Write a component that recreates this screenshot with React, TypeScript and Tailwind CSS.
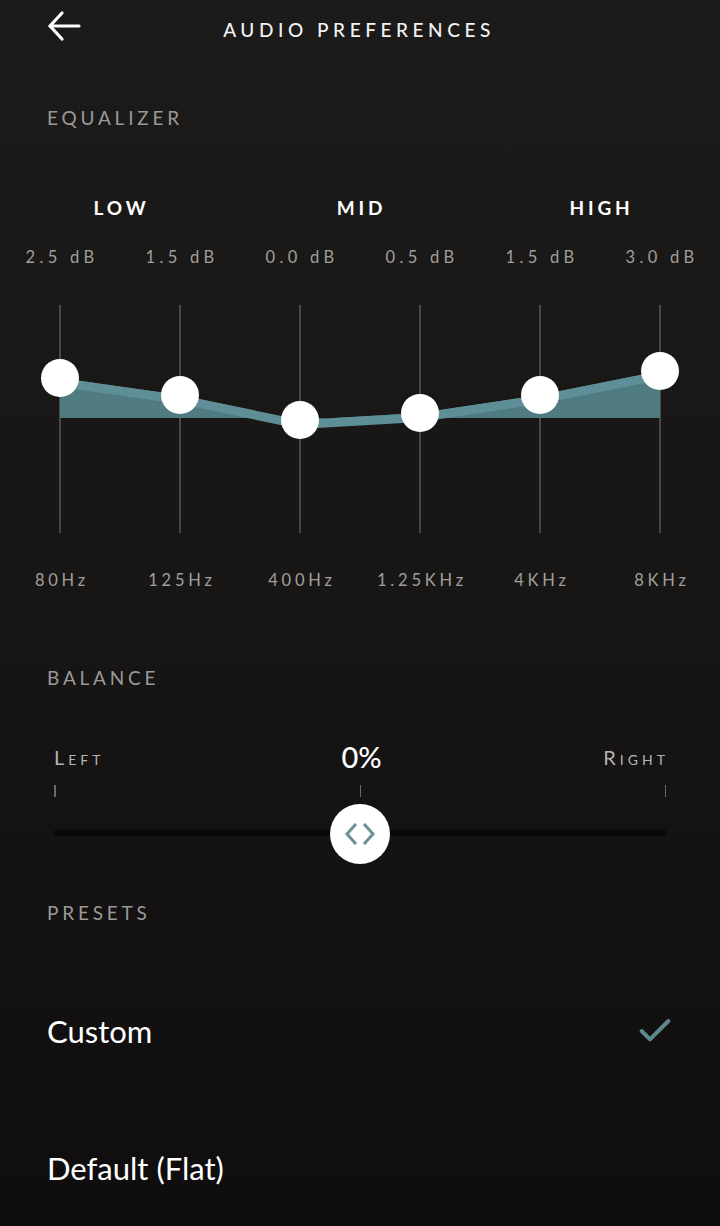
import { Check } from 'lucide-react';

const BANDS = [
  { hz: '80Hz', db: '2.5 dB', y: 109 },
  { hz: '125Hz', db: '1.5 dB', y: 126 },
  { hz: '400Hz', db: '0.0 dB', y: 151 },
  { hz: '1.25KHz', db: '0.5 dB', y: 144 },
  { hz: '4KHz', db: '1.5 dB', y: 126 },
  { hz: '8KHz', db: '3.0 dB', y: 102 },
];

const GROUPS = ['LOW', 'MID', 'HIGH'];

const FONT = "font-['Lato','Noto_Sans',sans-serif]";

function SectionLabel({ children, className = '' }: { children: string; className?: string }) {
  return (
    <p className={`px-[47px] text-[19px] leading-[24px] tracking-[0.2em] text-[#9b9997] ${className}`}>
      {children}
    </p>
  );
}

function EqChart() {
  const base = 149;
  const xs = BANDS.map((_, i) => 60 + i * 120);
  const line = BANDS.map((b, i) => `${xs[i]},${b.y}`).join(' ');
  const lower = BANDS.map((b, i) => `${xs[i]},${b.y + 9}`).reverse().join(' ');
  const area = `60,${base} ${line} 660,${base}`;
  return (
    <svg width="720" height="276" viewBox="0 0 720 276" className="block">
      {xs.map(x => (
        <line key={x} x1={x} y1="36" x2={x} y2="264" stroke="#5a5856" strokeWidth="1.5" />
      ))}
      <polygon points={area} fill="#4f7b81" />
      {/* highlight band under the curve */}
      <polygon points={`${line} ${lower}`} fill="#5f8f96" />
      {BANDS.map((b, i) => (
        <circle key={b.hz} cx={xs[i]} cy={b.y} r="19" fill="#ffffff" />
      ))}
    </svg>
  );
}

export default function App() {
  return (
    <div className={`${FONT} w-[720px] h-[1226px] overflow-hidden bg-gradient-to-b from-[#1d1b19] via-[#181615] to-[#0f0d0d] text-white`}>
      {/* header */}
      <div className="h-[60px] grid grid-cols-[1fr_auto_1fr] items-center">
        <button className="pl-[45px] pb-[8px] self-center">
          <svg width="38" height="32" viewBox="0 0 38 32" fill="none" stroke="#ffffff" strokeWidth="3.2" strokeLinecap="round" strokeLinejoin="round">
            <path d="M34 16H5" />
            <path d="M17 3L5 16l12 13" />
          </svg>
        </button>
        <h1 className="text-[19px] leading-[24px] tracking-[0.24em] font-medium text-[#f2f2f2] ml-[-2px]">AUDIO PREFERENCES</h1>
        <div />
      </div>

      <SectionLabel className="mt-[46px]">EQUALIZER</SectionLabel>

      <div className="mt-[66px] grid grid-cols-3 text-center text-[19px] leading-[24px] font-bold tracking-[0.2em]">
        {GROUPS.map(g => (
          <span key={g} className="pl-[3px]">{g}</span>
        ))}
      </div>

      <div className="mt-[25px] grid grid-cols-6 text-center text-[16.5px] leading-[24px] tracking-[0.26em] text-[#a19f9d]">
        {BANDS.map(b => (
          <span key={b.hz} className="pl-[4px]">{b.db}</span>
        ))}
      </div>

      <EqChart />

      <div className="mt-[23px] grid grid-cols-6 text-center text-[16.5px] leading-[24px] tracking-[0.23em] text-[#a19f9d]">
        {BANDS.map(b => (
          <span key={b.hz} className="pl-[4px]">{b.hz}</span>
        ))}
      </div>

      <SectionLabel className="mt-[74px]">BALANCE</SectionLabel>

      {/* balance slider */}
      <div className="mt-[49px] mx-[54px]">
        <div className="h-[36px] flex items-center justify-between text-[#b5b3b1]">
          <span className="text-[20px] tracking-[0.2em] [font-variant:small-caps] w-[90px]">Left</span>
          <span className="text-[29px] font-medium text-white">0%</span>
          <span className="text-[20px] tracking-[0.2em] [font-variant:small-caps] w-[90px] text-right mr-[-3px]">Right</span>
        </div>
        <div className="mt-[10px] h-[12px] flex justify-between">
          <span className="w-[1.5px] bg-[#6b6967]" />
          <span className="w-[1.5px] bg-[#6b6967] ml-[1px]" />
          <span className="w-[1.5px] bg-[#6b6967]" />
        </div>
        <div className="mt-[7px] relative h-[60px] flex items-center">
          <div className="w-full h-[7px] rounded-full bg-[#0b0909] -mt-[4px]" />
          <div className="absolute left-1/2 top-0 -translate-x-1/2 w-[60px] h-[60px] rounded-full bg-white flex items-center justify-center">
            <svg width="32" height="22" viewBox="0 0 32 22" fill="none" stroke="#6f9297" strokeWidth="3" strokeLinecap="square">
              <path d="M11 2L3 11l8 9" />
              <path d="M21 2l8 9-8 9" />
            </svg>
          </div>
        </div>
      </div>

      <SectionLabel className="mt-[37px]">PRESETS</SectionLabel>

      {/* preset list */}
      <div className="mt-[86px] px-[47px] flex items-center justify-between h-[40px]">
        <span className="text-[31px] text-white">Custom</span>
        <Check size={40} strokeWidth={2.4} className="text-[#5b878d] mr-[-2px]" />
      </div>
      <div className="mt-[97px] px-[47px] flex items-center h-[40px]">
        <span className="text-[31px] text-white">Default (Flat)</span>
      </div>
    </div>
  );
}
